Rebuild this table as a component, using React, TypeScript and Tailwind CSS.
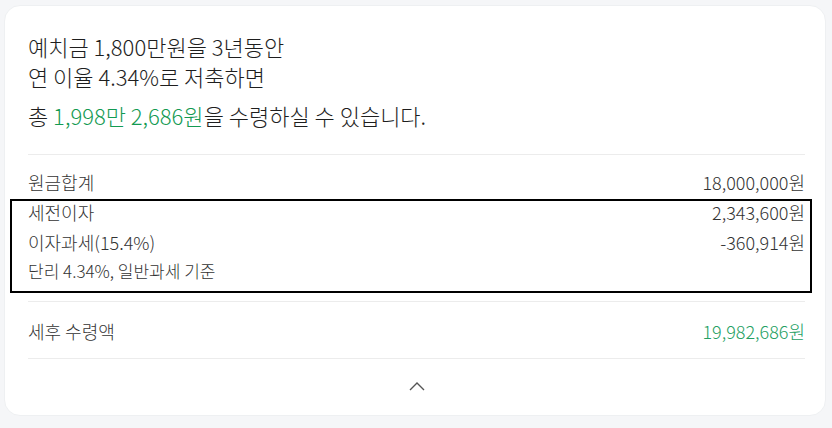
import React from "react";

const font = { fontFamily: '"Noto Sans CJK KR", "Noto Sans", sans-serif' };

export default function App() {
  return (
    <div className="w-[832px] h-[428px] bg-[#f5f6f8] pt-[5px] pl-[4px] pr-[6px] font-light" style={font}>
      <div className="bg-white rounded-[16px] border border-[#eef0f2] h-[411px] pl-[23px] pr-[20px] pt-[25px] flex flex-col">
        <div className="text-[22px] leading-[30px] text-[#1e1e1e]">
          <div>예치금 1,800만원을 3년동안</div>
          <div>연 이율 4.34%로 저축하면</div>
          <div className="mt-[9px]">
            총 <span className="text-[#139a52]">1,998만 2,686원</span>을 수령하실 수 있습니다.
          </div>
        </div>
        <div className="mt-[24px] border-t border-[#ececec]" />
        <div className="pt-[12px] text-[18px] text-[#333]">
          <div className="flex items-center justify-between h-[30px]">
            <span>원금합계</span>
            <span>18,000,000원</span>
          </div>
          <div className="ml-[-18px] mr-[-7px] border-2 border-black pl-[16px] pr-[5px] mt-[2px] pb-[10px]">
            <div className="flex items-center justify-between h-[22px]">
              <span>세전이자</span>
              <span>2,343,600원</span>
            </div>
            <div className="flex items-center justify-between h-[38px]">
              <span>이자과세(15.4%)</span>
              <span>-360,914원</span>
            </div>
            <div className="h-[20px] flex items-center text-[17px]">단리 4.34%, 일반과세 기준</div>
          </div>
        </div>
        <div className="mt-[8px] border-t border-[#ececec]" />
        <div className="h-[56px] pt-[2px] flex items-center justify-between text-[18px]">
          <span className="text-[#333]">세후 수령액</span>
          <span className="text-[#24a062]">19,982,686원</span>
        </div>
        <div className="border-t border-[#ececec]" />
        <div className="flex justify-center pt-[22px]">
          <svg width="16" height="10" viewBox="0 0 16 10" fill="none">
            <path d="M1 9 L8 2 L15 9" stroke="#555" strokeWidth="1.4" />
          </svg>
        </div>
      </div>
    </div>
  );
}
